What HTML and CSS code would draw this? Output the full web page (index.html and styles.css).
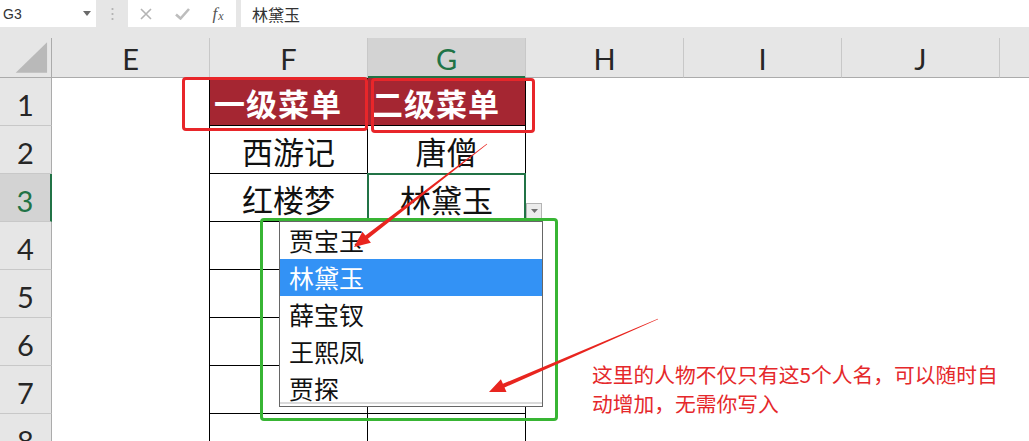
FILE: index.html
```html
<!DOCTYPE html>
<html lang="zh">
<head>
<meta charset="utf-8">
<title>二级下拉菜单</title>
<link rel="stylesheet" href="styles.css">
</head>
<body>
<div class="app">
  <div class="topbar">
    <div class="fbar">
      <div class="namebox"><span>G3</span>
        <svg class="nb-arrow" width="8" height="5" viewBox="0 0 8 5"><polygon points="0,0 8,0 4,5" fill="#6a6a6a"/></svg>
      </div>
      <div class="grip">
        <svg width="3" height="14" viewBox="0 0 3 14"><circle cx="1.5" cy="2" r="1.1" fill="#b0b0b0"/><circle cx="1.5" cy="7" r="1.1" fill="#b0b0b0"/><circle cx="1.5" cy="12" r="1.1" fill="#b0b0b0"/></svg>
      </div>
      <div class="fxbox">
        <span class="fx-slot"><svg width="12" height="12" viewBox="0 0 12 12"><path d="M1 1 L11 11 M11 1 L1 11" stroke="#b4b4b4" stroke-width="1.6" fill="none"/></svg></span>
        <span class="fx-slot"><svg width="15" height="12" viewBox="0 0 15 12"><path d="M1 6.5 L5.5 10.5 L14 1" stroke="#bdbdbd" stroke-width="2.6" fill="none"/></svg></span>
        <span class="fx-slot fx"><i>f</i><i class="fx-x">x</i></span>
      </div>
      <div class="formula">林黛玉</div>
    </div>
  </div>

  <div class="sheet">
    <!-- header row -->
    <div class="corner"><svg width="52" height="40" viewBox="0 0 52 40"><polygon points="16,35 48,35 48,4" fill="#b9b9b9"/></svg></div>
    <div class="ch">E</div>
    <div class="ch">F</div>
    <div class="ch sel">G</div>
    <div class="ch">H</div>
    <div class="ch">I</div>
    <div class="ch">J</div>
    <div class="ch last"></div>

    <!-- row 1 -->
    <div class="rh">1</div>
    <div class="e"></div>
    <div class="t hd">一级菜单</div>
    <div class="t hd">二级菜单</div>
    <div></div><div></div><div></div><div></div>

    <!-- row 2 -->
    <div class="rh">2</div>
    <div class="e"></div>
    <div class="t">西游记</div>
    <div class="t">唐僧</div>
    <div></div><div></div><div></div><div></div>

    <!-- row 3 -->
    <div class="rh sel">3</div>
    <div class="e"></div>
    <div class="t">红楼梦</div>
    <div class="t g3">林黛玉<span class="dd-btn"><svg width="7" height="4" viewBox="0 0 7 4"><polygon points="0,0 7,0 3.5,4" fill="#707070"/></svg></span></div>
    <div></div><div></div><div></div><div></div>

    <!-- row 4 -->
    <div class="rh">4</div>
    <div class="e"></div>
    <div class="t"></div>
    <div class="t"></div>
    <div></div><div></div><div></div><div></div>

    <!-- row 5 -->
    <div class="rh">5</div>
    <div class="e"></div>
    <div class="t"></div>
    <div class="t"></div>
    <div></div><div></div><div></div><div></div>

    <!-- row 6 -->
    <div class="rh">6</div>
    <div class="e"></div>
    <div class="t"></div>
    <div class="t"></div>
    <div></div><div></div><div></div><div></div>

    <!-- row 7 -->
    <div class="rh">7</div>
    <div class="e"></div>
    <div class="t"></div>
    <div class="t"></div>
    <div></div><div></div><div></div><div></div>

    <!-- row 8 -->
    <div class="rh">8</div>
    <div class="e"></div>
    <div class="t"></div>
    <div class="t"></div>
    <div></div><div></div><div></div><div></div>
  </div>

  <!-- overlays: dropdown list and annotations -->
  <div class="dropdown">
    <div class="dd-item">贾宝玉</div>
    <div class="dd-item on">林黛玉</div>
    <div class="dd-item">薛宝钗</div>
    <div class="dd-item">王熙凤</div>
    <div class="dd-item">贾探</div>
  </div>

  <div class="mark red mark-f1"></div>
  <div class="mark red mark-g1"></div>
  <div class="mark green mark-list"></div>

  <div class="note">这里的人物不仅只有这5个人名，可以随时自<br>动增加，无需你写入</div>

  <svg class="arrows" width="1029" height="441" viewBox="0 0 1029 441">
    <polygon fill="#e8251f" points="487.2,144.2 367.9,238.8 370.9,242.7 354,247 362.4,231.7 365.4,235.6 486.8,143.8"/>
    <polygon fill="#e8251f" points="658.1,319.3 504.5,387.5 506.5,392.1 489,392 500.9,379.2 502.9,383.8 657.9,318.7"/>
  </svg>
</div>
</body>
</html>
```

FILE: styles.css
```css
* { box-sizing: border-box; }

body {
  margin: 0;
  background: #ffffff;
  font-family: "Noto Sans CJK SC", "Noto Sans", sans-serif;
}

.app {
  position: relative;
  width: 1029px;
  height: 441px;
  overflow: hidden;
  background: #ffffff;
}

/* ---------- formula bar ---------- */
.topbar {
  height: 38px;
  background: #e6e6e6;
  padding-bottom: 11px;
}

.fbar {
  display: flex;
  height: 27px;
}

.namebox {
  width: 96px;
  background: #ffffff;
  display: flex;
  align-items: center;
  justify-content: space-between;
  padding: 0 5px 0 3px;
  font: 14px "Liberation Sans", Arial, sans-serif;
  color: #333333;
}

.grip {
  width: 32px;
  display: flex;
  align-items: center;
  justify-content: center;
}

.fxbox {
  width: 108px;
  background: #ffffff;
  display: flex;
  align-items: center;
}

.fx-slot {
  width: 36px;
  display: flex;
  align-items: center;
  justify-content: center;
}

.fx {
  font-family: "Liberation Serif", "Times New Roman", serif;
  font-size: 17px;
  color: #555555;
  padding-top: 1px;
}

.fx-x {
  font-size: 12px;
  margin-left: 1px;
  padding-top: 4px;
}

.formula {
  flex: 1;
  margin-left: 5px;
  background: #ffffff;
  display: flex;
  align-items: center;
  padding-left: 11px;
  font-size: 16px;
  color: #333333;
}

/* ---------- grid ---------- */
.sheet {
  display: grid;
  grid-template-columns: 52px repeat(6, 158px) 29px;
  grid-template-rows: 40px repeat(8, 48px);
}

.sheet > div {
  position: relative;
  display: flex;
  align-items: center;
  justify-content: center;
  font-size: 31px;
  color: #111111;
}

.corner {
  background: #e6e6e6;
  border-right: 1px solid #ababab;
  border-bottom: 1px solid #ababab;
}

.corner svg { display: block; }

.sheet > .ch {
  background: #e6e6e6;
  border-right: 1px solid #c8c8c8;
  border-bottom: 1px solid #ababab;
  font-family: "Lato", "Liberation Sans", sans-serif;
  font-size: 29px;
  color: #262626;
  padding-top: 2px;
}

.sheet > .ch.sel {
  background: #d3d3d3;
  color: #217346;
  border-bottom: 1px solid #217346;
  box-shadow: inset 0 -1px 0 #217346;
}

.sheet > .ch.last { border-right: none; }

.sheet > .rh {
  background: #e6e6e6;
  border-right: 1px solid #ababab;
  border-bottom: 1px solid #c8c8c8;
  font-family: "Lato", "Liberation Sans", sans-serif;
  font-size: 29px;
  color: #262626;
  padding-top: 6px;
}

.sheet > .rh.sel {
  background: #d3d3d3;
  color: #217346;
  border-right: 2px solid #217346;
}

.sheet > .e {
  border-right: 1px solid #000000;
}

.sheet > .t {
  border-right: 1px solid #000000;
  border-bottom: 1px solid #000000;
  padding-top: 2px;
}

.sheet > .hd {
  background: #a52632;
  color: #ffffff;
  font-weight: 700;
  font-size: 31px;
  letter-spacing: 1px;
  justify-content: flex-start;
  padding-left: 4px;
}

.sheet > .g3::after {
  content: "";
  position: absolute;
  top: -1px;
  left: -1px;
  right: -1px;
  bottom: -1px;
  border: 2px solid #217346;
}

.dd-btn {
  position: absolute;
  left: calc(100% + 1px);
  top: 29px;
  width: 16px;
  height: 16px;
  background: #ececec;
  border: 1px solid #b4b4b4;
  display: flex;
  align-items: center;
  justify-content: center;
}

/* ---------- dropdown list (overlay) ---------- */
.dropdown {
  position: absolute;
  left: 279px;
  top: 221px;
  width: 264px;
  height: 186px;
  background: #ffffff;
  border: 1px solid #666666;
}

.dropdown::after {
  content: "";
  position: absolute;
  left: 0;
  right: 0;
  bottom: 2px;
  height: 2px;
  background: #dadada;
}

.dd-item {
  height: 37px;
  line-height: 37px;
  padding-left: 9px;
  font-size: 25px;
  color: #111111;
}

.dd-item.on {
  background: #3392f5;
  color: #ffffff;
}

/* ---------- annotations ---------- */
.mark {
  position: absolute;
  border-radius: 4px;
}

.mark.red { border: 3px solid #e8262a; }
.mark.green { border: 3px solid #38b534; }

.mark-f1 { left: 182px; top: 77px; width: 186px; height: 54px; }
.mark-g1 { left: 371px; top: 78px; width: 164px; height: 55px; }
.mark-list { left: 260px; top: 218px; width: 298px; height: 203px; }

.note {
  position: absolute;
  left: 592px;
  top: 360px;
  font-size: 20.75px;
  line-height: 29px;
  color: #e5282b;
  white-space: nowrap;
}

.arrows {
  position: absolute;
  left: 0;
  top: 0;
  pointer-events: none;
}
```
